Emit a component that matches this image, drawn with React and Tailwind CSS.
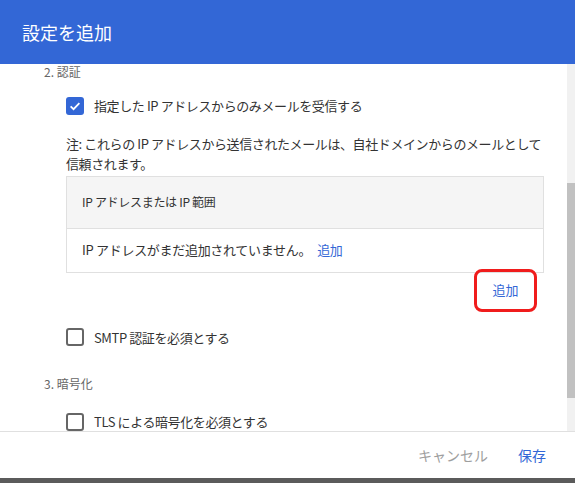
import React, { useState } from 'react';

const font = { fontFamily: '"Noto Sans CJK JP", "Noto Sans", sans-serif' };

function Checkbox({ checked, onChange, label }) {
  return (
    <label className="flex items-center cursor-pointer select-none">
      <span
        onClick={onChange}
        className={
          checked
            ? 'w-[18px] h-[18px] rounded-[3px] bg-[#3367d6] flex items-center justify-center'
            : 'w-[18px] h-[18px] rounded-[3px] border-2 border-[#666]'
        }
      >
        {checked && (
          <svg width="14" height="14" viewBox="0 0 24 24">
            <path d="M4.5 12.5l5 5 10-10.5" fill="none" stroke="white" strokeWidth="3" />
          </svg>
        )}
      </span>
      <span className="ml-[10px] text-[13px] tracking-[-0.4px] text-[#333]">{label}</span>
    </label>
  );
}

export default function App() {
  const [ipOnly, setIpOnly] = useState(true);
  const [smtp, setSmtp] = useState(false);
  const [tls, setTls] = useState(false);

  return (
    <div className="w-[575px] h-[483px] flex flex-col overflow-hidden bg-white" style={font}>
      <div className="h-[64px] shrink-0 bg-[#3367d6] flex items-center px-[22px]">
        <h2 className="text-white text-[18px] leading-none">設定を追加</h2>
      </div>

      <div className="flex flex-1 min-h-0">
        <div className="flex-1 overflow-hidden">
          <div className="pl-[44px] h-[16px] leading-[16px] text-[12px] text-[#666]">2. 認証</div>

          <div className="pl-[66px] pr-[23px]">
            <div className="mt-[16px]">
              <Checkbox
                checked={ipOnly}
                onChange={() => setIpOnly(!ipOnly)}
                label="指定した IP アドレスからのみメールを受信する"
              />
            </div>

            <p className="mt-[18px] text-[13px] tracking-[-0.4px] leading-[20px] text-[#333] whitespace-nowrap">
              注: これらの IP アドレスから送信されたメールは、自社ドメインからのメールとして
              <br />
              信頼されます。
            </p>

            <div className="mt-[2px] border border-[#e0e0e0]">
              <div className="h-[52px] bg-[#f5f5f5] flex items-center px-[15px] text-[12px] tracking-[-0.3px] text-[#333] border-b border-[#e0e0e0]">
                IP アドレスまたは IP 範囲
              </div>
              <div className="h-[43px] flex items-center px-[15px] text-[13px] tracking-[-0.3px] text-[#333]">
                IP アドレスがまだ追加されていません。
                <a className="ml-[6px] text-[#3367d6] cursor-pointer">追加</a>
              </div>
            </div>

            <div className="flex justify-end -mt-[4px] pr-[7px]">
              <button className="w-[63px] h-[43px] rounded-[8px] border-[3px] border-[#f01c1c] text-[13px] text-[#3367d6]">
                追加
              </button>
            </div>

            <div className="mt-[16px]">
              <Checkbox checked={smtp} onChange={() => setSmtp(!smtp)} label="SMTP 認証を必須とする" />
            </div>
          </div>

          <div className="pl-[44px] mt-[29px] text-[12px] leading-[16px] text-[#666]">3. 暗号化</div>

          <div className="pl-[66px] mt-[20px]">
            <Checkbox checked={tls} onChange={() => setTls(!tls)} label="TLS による暗号化を必須とする" />
          </div>
        </div>

        <div className="w-[8px] shrink-0 bg-[#f1f1f1] flex flex-col">
          <div className="mt-[119px] h-[215px] bg-[#c1c1c1]" />
        </div>
      </div>

      <div className="h-[47px] shrink-0 border-t border-[#e0e0e0] flex items-center justify-end gap-[30px] pr-[29px] text-[14px]">
        <button className="text-[#9e9e9e]">キャンセル</button>
        <button className="text-[#3367d6]">保存</button>
      </div>
      <div className="h-[5px] shrink-0 bg-[#5b5b5b]" />
    </div>
  );
}
